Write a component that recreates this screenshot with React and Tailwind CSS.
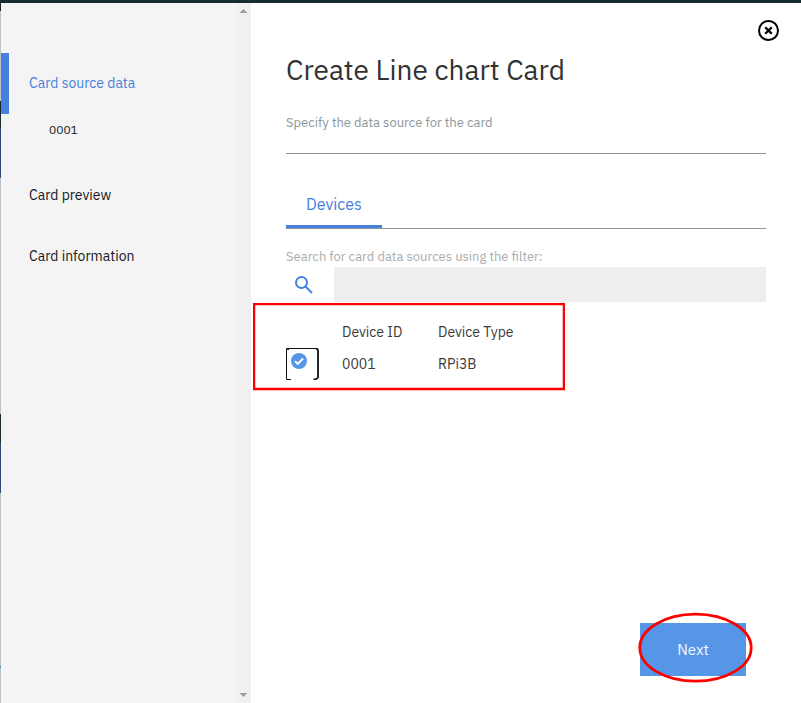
const edgeSegments = [
  'h-[8px] bg-[#1b2a30]',
  'h-[90px] bg-[#bcc2c6]',
  'h-[27px] bg-[#1b2a30]',
  'h-[50px] bg-[#2a4a78]',
  'h-[236px] bg-[#bcc2c6]',
  'h-[29px] bg-[#1b2a30]',
  'h-[50px] bg-[#2a4a78]',
  'h-[173px] bg-[#bcc2c6]',
  'h-[2px] bg-[#5b93bd]',
  'h-[35px] bg-[#bcc2c6]',
];

function Sidebar() {
  return (
    <aside className="flex w-[251px] shrink-0 bg-[#f4f4f4]">
      <div className="flex w-px flex-col">
        {edgeSegments.map((c, i) => (
          <div key={i} className={c} />
        ))}
      </div>
      <nav className="flex flex-1 flex-col pt-[50px] text-sm text-[#15191b]">
        <div className="flex h-[61px] items-center border-l-8 border-[#4580dd] pb-[2px] pl-5 text-[#4580dd]">
          <span>Card source data</span>
        </div>
        <div className="flex h-[50px] pl-12 pt-[6px] text-xs leading-5">
          <span>0001</span>
        </div>
        <div className="flex h-[61px] items-center pl-7">
          <span>Card preview</span>
        </div>
        <div className="flex h-[61px] items-center pl-7">
          <span>Card information</span>
        </div>
      </nav>
      <div className="flex w-[15px] flex-col items-center justify-between bg-[#f0f0f0] pb-[6px] pt-[6px]">
        <svg width="7" height="4" viewBox="0 0 7 4" fill="#a0a0a0" shapeRendering="crispEdges">
          <path d="M3 0h1v1h1v1h1v1h1v1H0V3h1V2h1V1h1z" />
        </svg>
        <svg width="7" height="4" viewBox="0 0 7 4" fill="#a0a0a0" shapeRendering="crispEdges">
          <path d="M0 0h7v1H6v1H5v1H4v1H3V3H2V2H1V1H0z" />
        </svg>
      </div>
    </aside>
  );
}

function DeviceTable() {
  return (
    <div className="relative -ml-[33px] mt-px h-[88px] w-[312px] pl-[33px]">
      <div className="flex h-8 pl-14 pt-[19px] text-sm leading-5 text-[#3a3a3a]">
        <span className="w-24">Device ID</span>
        <span>Device Type</span>
      </div>
      <div className="mt-[13px] flex h-8 text-sm leading-8 text-[#3a3a3a]">
        <div className="w-14">
          <svg width="33" height="32" viewBox="0 0 33 32" fill="none">
            <path d="M31 .5H.5V31.5H5M1.5 2V1.5H3" stroke="#111" />
            <path d="M30 .6Q32 .6 32 3V29Q32 31.2 27.5 31.5" stroke="#111" strokeWidth="1.8" />
            <circle cx="13" cy="13" r="8" fill="#5596e6" />
            <path d="M9 13.2l2.8 2.7 5.2-5.4" stroke="#fff" strokeWidth="2" />
          </svg>
        </div>
        <span className="w-24">0001</span>
        <span>RPi3B</span>
      </div>
      <svg className="absolute left-0 top-0" width="312" height="88" fill="none">
        <rect x="1" y="1" width="310" height="85" stroke="#f00" strokeWidth="2.5" />
      </svg>
    </div>
  );
}

export default function App() {
  return (
    <div className="flex h-[703px] w-[801px] flex-col overflow-hidden bg-white font-['IBM_Plex_Sans',Roboto,sans-serif]">
      <div className="h-[3px] shrink-0 bg-[#182b33]" />
      <div className="flex h-[700px]">
        <Sidebar />
        <main className="relative flex flex-1 flex-col pl-[35px] pr-[35px]">
          <button className="absolute right-[22px] top-[17px]" aria-label="Close">
            <svg width="21" height="21" viewBox="0 0 21 21" fill="none" stroke="#000">
              <circle cx="10.5" cy="10.5" r="9.5" strokeWidth="2" />
              <path d="M7.2 7.2l6.6 6.6M13.8 7.2l-6.6 6.6" strokeWidth="2.3" />
            </svg>
          </button>
          <h1 className="mt-[47px] h-10 whitespace-nowrap text-[28px] font-normal leading-10 text-[#323232]">
            Create Line chart Card
          </h1>
          <p className="mt-[23px] h-5 whitespace-nowrap text-[13px] leading-5 text-[#8c969b]">
            Specify the data source for the card
          </p>
          <div className="mt-[20px] h-px bg-[#8a9195]" />
          <div className="mt-[26px] flex h-[49px] border-b border-[#8c969b]">
            <div className="h-12 w-24 border-b-[3px] border-[#4580dd] text-center text-base leading-[48px] text-[#4580dd]">
              Devices
            </div>
          </div>
          <p className="mt-[18px] h-5 whitespace-nowrap text-[13px] leading-5 text-[#acacac]">
            Search for card data sources using the filter:
          </p>
          <div className="flex h-[35px]">
            <div className="w-12 pl-[9px] pt-[9px]">
              <svg width="18" height="18" viewBox="0 0 18 18" fill="none" stroke="#4580dd" strokeWidth="2">
                <circle cx="6.5" cy="6.5" r="5.5" />
                <path d="M10.5 10.5L17 17" />
              </svg>
            </div>
            <div className="flex-1 bg-[#eee]" />
          </div>
          <DeviceTable />
          <div className="mr-5 mt-[232px] flex justify-end">
            <button className="relative h-[53px] w-[106px] bg-[#5596e6] pt-[2px] text-[15px] text-[#f4f8fd]">
              Next
              <svg className="absolute -left-[2px] -top-[11px]" width="115" height="71" fill="none">
                <ellipse cx="57.5" cy="35.7" rx="55.7" ry="33.5" stroke="#f00" strokeWidth="2.8" />
              </svg>
            </button>
          </div>
        </main>
      </div>
    </div>
  );
}
